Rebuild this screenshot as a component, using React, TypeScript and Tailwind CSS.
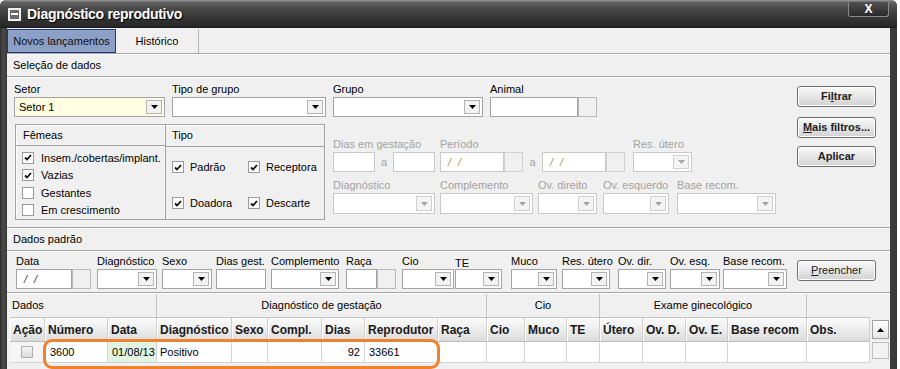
import React from "react";

const Arrow = ({ disabled }: { disabled?: boolean }) => (
  <svg width="7" height="4" viewBox="0 0 7 4">
    <path d="M0 0h7L3.5 4z" fill={disabled ? "#a6a6a6" : "#000"} />
  </svg>
);

function Select({ w, disabled, bg, h }: { w: string; disabled?: boolean; bg?: string; h?: string }) {
  return (
    <div
      className={`${w} ${h ?? "h-[20px]"} border ${disabled ? "border-[#c9c9c9]" : "border-[#a3a3a3]"} ${bg ?? "bg-white"} flex items-stretch p-[2px] pl-[4px]`}
    >
      <div className="flex-1" />
      <div
        className={`w-[16px] border ${disabled ? "border-[#d0d0d0] bg-[#f4f4f4]" : "border-[#b4b4b4] bg-[#f3f3f3]"} flex items-center justify-center`}
      >
        <Arrow disabled={disabled} />
      </div>
    </div>
  );
}

function TextBox({ w, disabled, h, children }: { w: string; disabled?: boolean; h?: string; children?: React.ReactNode }) {
  return (
    <div
      className={`${w} ${h ?? "h-[20px]"} border ${disabled ? "border-[#c9c9c9]" : "border-[#a3a3a3]"} bg-white flex items-center pl-[7px]`}
    >
      {children}
    </div>
  );
}

function SideBtn({ w, disabled, h }: { w: string; disabled?: boolean; h?: string }) {
  return (
    <div
      className={`${w} ${h ?? "h-[20px]"} border ${disabled ? "border-[#d0d0d0]" : "border-[#b8b8b8]"} bg-[#f0f0f0]`}
    />
  );
}

function DateBox({ w, disabled, h }: { w: string; disabled?: boolean; h?: string }) {
  return (
    <TextBox w={w} disabled={disabled} h={h}>
      <span className={`italic tracking-[2px] ${disabled ? "text-[#b08a55]" : "text-[#333]"}`}>/ /</span>
    </TextBox>
  );
}

const Check = ({ checked, gray }: { checked?: boolean; gray?: boolean }) => (
  <div
    className={`w-[12px] h-[12px] border ${gray ? "border-[#b0b0b0] bg-[linear-gradient(#f4f4f4,#dcdcdc)]" : "border-[#9a9a9a] bg-white"} flex items-center justify-center shrink-0`}
  >
    {checked && (
      <svg width="8" height="7" viewBox="0 0 8 7">
        <path d="M1 3.5l2 2L7 1" stroke="#111" strokeWidth="1.8" fill="none" />
      </svg>
    )}
  </div>
);

const HLine = () => <div className="h-[2px] border-t border-[#a6a6a6] bg-white shrink-0" />;

function Label({ children, disabled, low }: { children: React.ReactNode; disabled?: boolean; low?: boolean }) {
  return (
    <div
      className={`h-[14px] w-0 overflow-visible leading-[14px] whitespace-nowrap ${low ? "pt-[2px]" : ""} ${disabled ? "text-[#a2a2a2]" : "text-black"}`}
    >
      {children}
    </div>
  );
}

function Button({ children, bold, className }: { children: React.ReactNode; bold?: boolean; className?: string }) {
  return (
    <div
      className={`w-[79px] h-[21px] rounded-[3px] border border-[#6f6f6f] bg-[linear-gradient(#fafafa,#e6e6e6_50%,#d2d2d2)] shadow-[inset_0_0_0_1px_#fff] flex items-center justify-center text-[#222] ${bold ? "font-bold" : ""} ${className ?? ""}`}
    >
      {children}
    </div>
  );
}

const cols: { label: string; w: string }[] = [
  { label: "Ação", w: "w-[35px]" },
  { label: "Número", w: "w-[63px]" },
  { label: "Data", w: "w-[49px]" },
  { label: "Diagnóstico", w: "w-[75px]" },
  { label: "Sexo", w: "w-[36px]" },
  { label: "Compl.", w: "w-[54px]" },
  { label: "Dias", w: "w-[43px]" },
  { label: "Reprodutor", w: "w-[73px]" },
  { label: "Raça", w: "w-[49px]" },
  { label: "Cio", w: "w-[38px]" },
  { label: "Muco", w: "w-[42px]" },
  { label: "TE", w: "w-[33px]" },
  { label: "Útero", w: "w-[43px]" },
  { label: "Ov. D.", w: "w-[43px]" },
  { label: "Ov. E.", w: "w-[42px]" },
  { label: "Base recom", w: "w-[79px]" },
  { label: "Obs.", w: "w-[63px]" },
];

export default function App() {
  return (
    <div className="w-[900px] h-[369px] bg-white overflow-hidden relative font-['Liberation_Sans',Arial,sans-serif] text-[11px] text-black">
      <div className="w-[897px] h-full bg-[linear-gradient(90deg,#2c2c2c,#4a4a4a_3px,#3a3a3a_7px)] rounded-t-[6px] flex flex-col">
        {/* Title bar */}
        <div className="h-[28px] shrink-0 relative flex items-center rounded-t-[6px] bg-[linear-gradient(#9c9c9c_0px,#666_2px,#4a4a4a_8px,#353535_18px,#262626_27px,#111_28px)]">
          <div className="ml-[8px] w-[13px] h-[13px] border-[2px] border-[#f0f0f0] bg-[#6a6a6a] flex items-center justify-center">
            <div className="w-[7px] h-[2px] bg-white" />
          </div>
          <div className="ml-[6px] text-white font-bold text-[14px] tracking-[-0.3px] leading-[18px] [text-shadow:1px_1px_1px_#000]">
            Diagnóstico reprodutivo
          </div>
          <div className="absolute left-[848px] top-[2px] w-[41px] h-[15px] rounded-b-[3px] border border-[#8a8a8a] border-t-0 bg-[linear-gradient(#505050,#2a2a2a)] flex items-center justify-center text-white font-bold text-[12px]">
            X
          </div>
        </div>

        {/* Body */}
        <div className="mx-[7px] flex-1 bg-[#f0f0f0] flex flex-col">
          {/* Tabs */}
          <div className="h-[25px] shrink-0 flex items-start pt-[1px]">
            <div className="w-[109px] h-[24px] bg-[#8c9fc6] border border-[#23387a] flex items-center justify-center text-[#111]">
              Novos lançamentos
            </div>
            <div className="w-[83px] h-[24px] border-r border-[#b5b5b5] flex items-center justify-center">
              Histórico
            </div>
          </div>
          <HLine />
          <div className="h-[21px] shrink-0 flex items-center pl-[6px]">Seleção de dados</div>
          <HLine />

          {/* Seleção content */}
          <div className="h-[149px] shrink-0 flex">
            {/* Left col */}
            <div className="ml-[7px] w-[312px] flex flex-col pt-[4px]">
              <div className="flex gap-[7px]">
                <div>
                  <Label>Setor</Label>
                  <div className="mt-[1px] w-[151px] h-[20px] border border-[#a3a3a3] bg-[#fffde2] flex items-center p-[2px] pl-[4px]">
                    <div className="flex-1">Setor 1</div>
                    <div className="w-[16px] h-full border border-[#b4b4b4] bg-[#f3f3f3] flex items-center justify-center">
                      <Arrow />
                    </div>
                  </div>
                </div>
                <div>
                  <Label>Tipo de grupo</Label>
                  <div className="mt-[1px]">
                    <Select w="w-[154px]" />
                  </div>
                </div>
              </div>
              <div className="mt-[7px] ml-[1px] w-[310px] h-[96px] border border-[#a3a3a3] shadow-[inset_1px_1px_0_#fff] flex">
                <div className="w-[150px] border-r border-[#a3a3a3] flex flex-col">
                  <div className="h-[22px] border-b border-[#a3a3a3] flex items-center pl-[7px]">Fêmeas</div>
                  <div className="flex flex-col pl-[6px] pt-[3px]">
                    {[
                      ["Insem./cobertas/implant.", true],
                      ["Vazias", true],
                      ["Gestantes", false],
                      ["Em crescimento", false],
                    ].map(([t, c]) => (
                      <div key={t as string} className="h-[17.5px] flex items-center gap-[7px]">
                        <Check checked={c as boolean} />
                        <span>{t as string}</span>
                      </div>
                    ))}
                  </div>
                </div>
                <div className="flex-1 flex flex-col">
                  <div className="h-[22px] border-b border-[#a3a3a3] flex items-center pl-[6px]">Tipo</div>
                  <div className="grid grid-cols-[76px_1fr] pl-[6px] pt-[13px] gap-y-[22px]">
                    {[
                      ["Padrão", true],
                      ["Receptora", true],
                      ["Doadora", true],
                      ["Descarte", true],
                    ].map(([t, c]) => (
                      <div key={t as string} className="h-[14px] flex items-center gap-[6px]">
                        <Check checked={c as boolean} />
                        <span>{t as string}</span>
                      </div>
                    ))}
                  </div>
                </div>
              </div>
            </div>

            {/* Middle col */}
            <div className="ml-[7px] w-[450px] flex flex-col pt-[4px]">
              <div className="flex gap-[7px]">
                <div>
                  <Label>Grupo</Label>
                  <div className="mt-[1px]">
                    <Select w="w-[150px]" />
                  </div>
                </div>
                <div>
                  <Label>Animal</Label>
                  <div className="mt-[1px] flex">
                    <TextBox w="w-[88px]" />
                    <SideBtn w="w-[19px]" />
                  </div>
                </div>
              </div>

              <div className="mt-[20px] flex items-start">
                <div>
                  <Label disabled>Dias em gestação</Label>
                  <div className="mt-[1px] flex items-center">
                    <TextBox w="w-[42px]" disabled />
                    <span className="w-[18px] text-center text-[#a2a2a2]">a</span>
                    <TextBox w="w-[42px]" disabled />
                  </div>
                </div>
                <div className="ml-[5px]">
                  <Label disabled>Período</Label>
                  <div className="mt-[1px] flex items-center">
                    <DateBox w="w-[64px]" disabled />
                    <SideBtn w="w-[19px]" disabled />
                    <span className="w-[19px] text-center text-[#a2a2a2]">a</span>
                    <DateBox w="w-[64px]" disabled />
                    <SideBtn w="w-[19px]" disabled />
                  </div>
                </div>
                <div className="ml-[8px]">
                  <Label disabled>Res. útero</Label>
                  <div className="mt-[1px]">
                    <Select w="w-[59px]" disabled />
                  </div>
                </div>
              </div>

              <div className="mt-[6px] flex items-start">
                <div>
                  <Label disabled>Diagnóstico</Label>
                  <div className="mt-[1px]">
                    <Select w="w-[102px]" disabled h="h-[21px]" />
                  </div>
                </div>
                <div className="ml-[5px]">
                  <Label disabled>Complemento</Label>
                  <div className="mt-[1px]">
                    <Select w="w-[93px]" disabled h="h-[21px]" />
                  </div>
                </div>
                <div className="ml-[5px]">
                  <Label disabled>Ov. direito</Label>
                  <div className="mt-[1px]">
                    <Select w="w-[59px]" disabled h="h-[21px]" />
                  </div>
                </div>
                <div className="ml-[6px]">
                  <Label disabled>Ov. esquerdo</Label>
                  <div className="mt-[1px]">
                    <Select w="w-[66px]" disabled h="h-[21px]" />
                  </div>
                </div>
                <div className="ml-[8px]">
                  <Label disabled>Base recom.</Label>
                  <div className="mt-[1px]">
                    <Select w="w-[99px]" disabled h="h-[21px]" />
                  </div>
                </div>
              </div>
            </div>

            {/* Right col buttons */}
            <div className="ml-[14px] flex flex-col pt-[8px]">
              <Button bold>
                Fi<span className="underline">l</span>trar
              </Button>
              <Button bold className="mt-[10px]">
                <span className="underline">M</span>ais filtros...
              </Button>
              <Button bold className="mt-[8px]">
                Aplicar
              </Button>
            </div>
          </div>

          <HLine />
          <div className="h-[21px] shrink-0 flex items-center pl-[6px]">Dados padrão</div>
          <HLine />

          {/* Dados padrão fields */}
          <div className="h-[40px] shrink-0 flex items-start pt-[2px] pl-[9px]">
            <div>
              <Label>Data</Label>
              <div className="mt-[1px] flex">
                <DateBox w="w-[56px]" />
                <SideBtn w="w-[19px]" />
              </div>
            </div>
            <div className="ml-[6px]">
              <Label>Diagnóstico</Label>
              <div className="mt-[1px]">
                <Select w="w-[60px]" />
              </div>
            </div>
            <div className="ml-[5px]">
              <Label>Sexo</Label>
              <div className="mt-[1px]">
                <Select w="w-[50px]" />
              </div>
            </div>
            <div className="ml-[4px]">
              <Label>Dias gest.</Label>
              <div className="mt-[1px]">
                <TextBox w="w-[50px]" />
              </div>
            </div>
            <div className="ml-[5px]">
              <Label>Complemento</Label>
              <div className="mt-[1px]">
                <Select w="w-[68px]" />
              </div>
            </div>
            <div className="ml-[7px]">
              <Label>Raça</Label>
              <div className="mt-[1px] flex">
                <TextBox w="w-[31px]" />
                <SideBtn w="w-[19px]" />
              </div>
            </div>
            <div className="ml-[6px]">
              <Label>Cio</Label>
              <div className="mt-[1px]">
                <Select w="w-[52px]" />
              </div>
            </div>
            <div className="ml-[1px]">
              <Label low>TE</Label>
              <div className="mt-[1px]">
                <Select w="w-[47px]" />
              </div>
            </div>
            <div className="ml-[9px]">
              <Label>Muco</Label>
              <div className="mt-[1px]">
                <Select w="w-[46px]" />
              </div>
            </div>
            <div className="ml-[5px]">
              <Label>Res. útero</Label>
              <div className="mt-[1px]">
                <Select w="w-[48px]" />
              </div>
            </div>
            <div className="ml-[8px]">
              <Label>Ov. dir.</Label>
              <div className="mt-[1px]">
                <Select w="w-[48px]" />
              </div>
            </div>
            <div className="ml-[4px]">
              <Label>Ov. esq.</Label>
              <div className="mt-[1px]">
                <Select w="w-[50px]" />
              </div>
            </div>
            <div className="ml-[3px]">
              <Label>Base recom.</Label>
              <div className="mt-[1px]">
                <Select w="w-[64px]" />
              </div>
            </div>
            <div className="ml-[10px] mt-[6px]">
              <Button>
                <span className="underline">P</span>reencher
              </Button>
            </div>
          </div>

          <HLine />

          {/* Table */}
          <div className="ml-[3px] flex">
            <div className="flex flex-col">
              {/* group header */}
              <div className="h-[24px] flex border-b border-[#c4c4c4]">
                <div className="w-[147px] border-r border-[#c4c4c4] flex items-center pl-[2px]">Dados</div>
                <div className="w-[330px] border-r border-[#c4c4c4] flex items-center justify-center">
                  Diagnóstico de gestação
                </div>
                <div className="w-[113px] border-r border-[#c4c4c4] flex items-center justify-center">Cio</div>
                <div className="w-[207px] border-r border-[#c4c4c4] flex items-center justify-center">
                  Exame ginecológico
                </div>
                <div className="w-[63px]" />
              </div>
              {/* column headers */}
              <div className="h-[24px] flex border-b border-[#bdbdbd]">
                {cols.map((c) => (
                  <div
                    key={c.label}
                    className={`${c.w} h-full border-r border-[#cfcfcf] shadow-[inset_1px_0_0_#fff] bg-[linear-gradient(#fbfbfb,#eeeeee_45%,#dcdcdc)] flex items-center pl-[3px] font-bold text-[12px] text-[#1a1a1a] whitespace-nowrap overflow-hidden`}
                  >
                    {c.label}
                  </div>
                ))}
              </div>
              {/* data row */}
              <div className="h-[21px] flex bg-white border-b border-[#d4d4d4]">
                {cols.map((c, i) => {
                  let content: React.ReactNode = null;
                  let extra = "";
                  if (i === 0) {
                    content = <Check gray />;
                    extra = "justify-center bg-[#f5f5f5]";
                  } else if (i === 1) {
                    content = "3600";
                    extra = "pl-[5px]";
                  } else if (i === 2) {
                    content = "01/08/13";
                    extra = "pl-[4px] bg-[#e4f4e2]";
                  } else if (i === 3) {
                    content = "Positivo";
                    extra = "pl-[3px]";
                  } else if (i === 6) {
                    content = "92";
                    extra = "justify-end pr-[4px]";
                  } else if (i === 7) {
                    content = "33661";
                    extra = "pl-[4px]";
                  }
                  return (
                    <div
                      key={c.label}
                      className={`${c.w} h-full border-r border-[#d4d4d4] flex items-center whitespace-nowrap overflow-hidden ${extra}`}
                    >
                      {content}
                    </div>
                  );
                })}
              </div>
            </div>
            {/* scrollbar */}
            <div className="w-[20px] flex flex-col items-center pt-[26px]">
              <div className="w-[17px] h-[19px] border border-[#a0a0a0] bg-[linear-gradient(#fdfdfd,#e6e6e6)] flex items-center justify-center">
                <svg width="7" height="4" viewBox="0 0 7 4">
                  <path d="M0 4h7L3.5 0z" fill="#000" />
                </svg>
              </div>
              <div className="mt-[3px] w-[17px] h-[17px] border border-[#c0c0c0] bg-[#f2f2f2]" />
            </div>
          </div>
        </div>
      </div>

      {/* Highlight overlay */}
      <div className="absolute left-[43px] top-[339px] w-[397px] h-[30px] border-[3px] border-[#f0822d] rounded-[9px]" />
    </div>
  );
}
